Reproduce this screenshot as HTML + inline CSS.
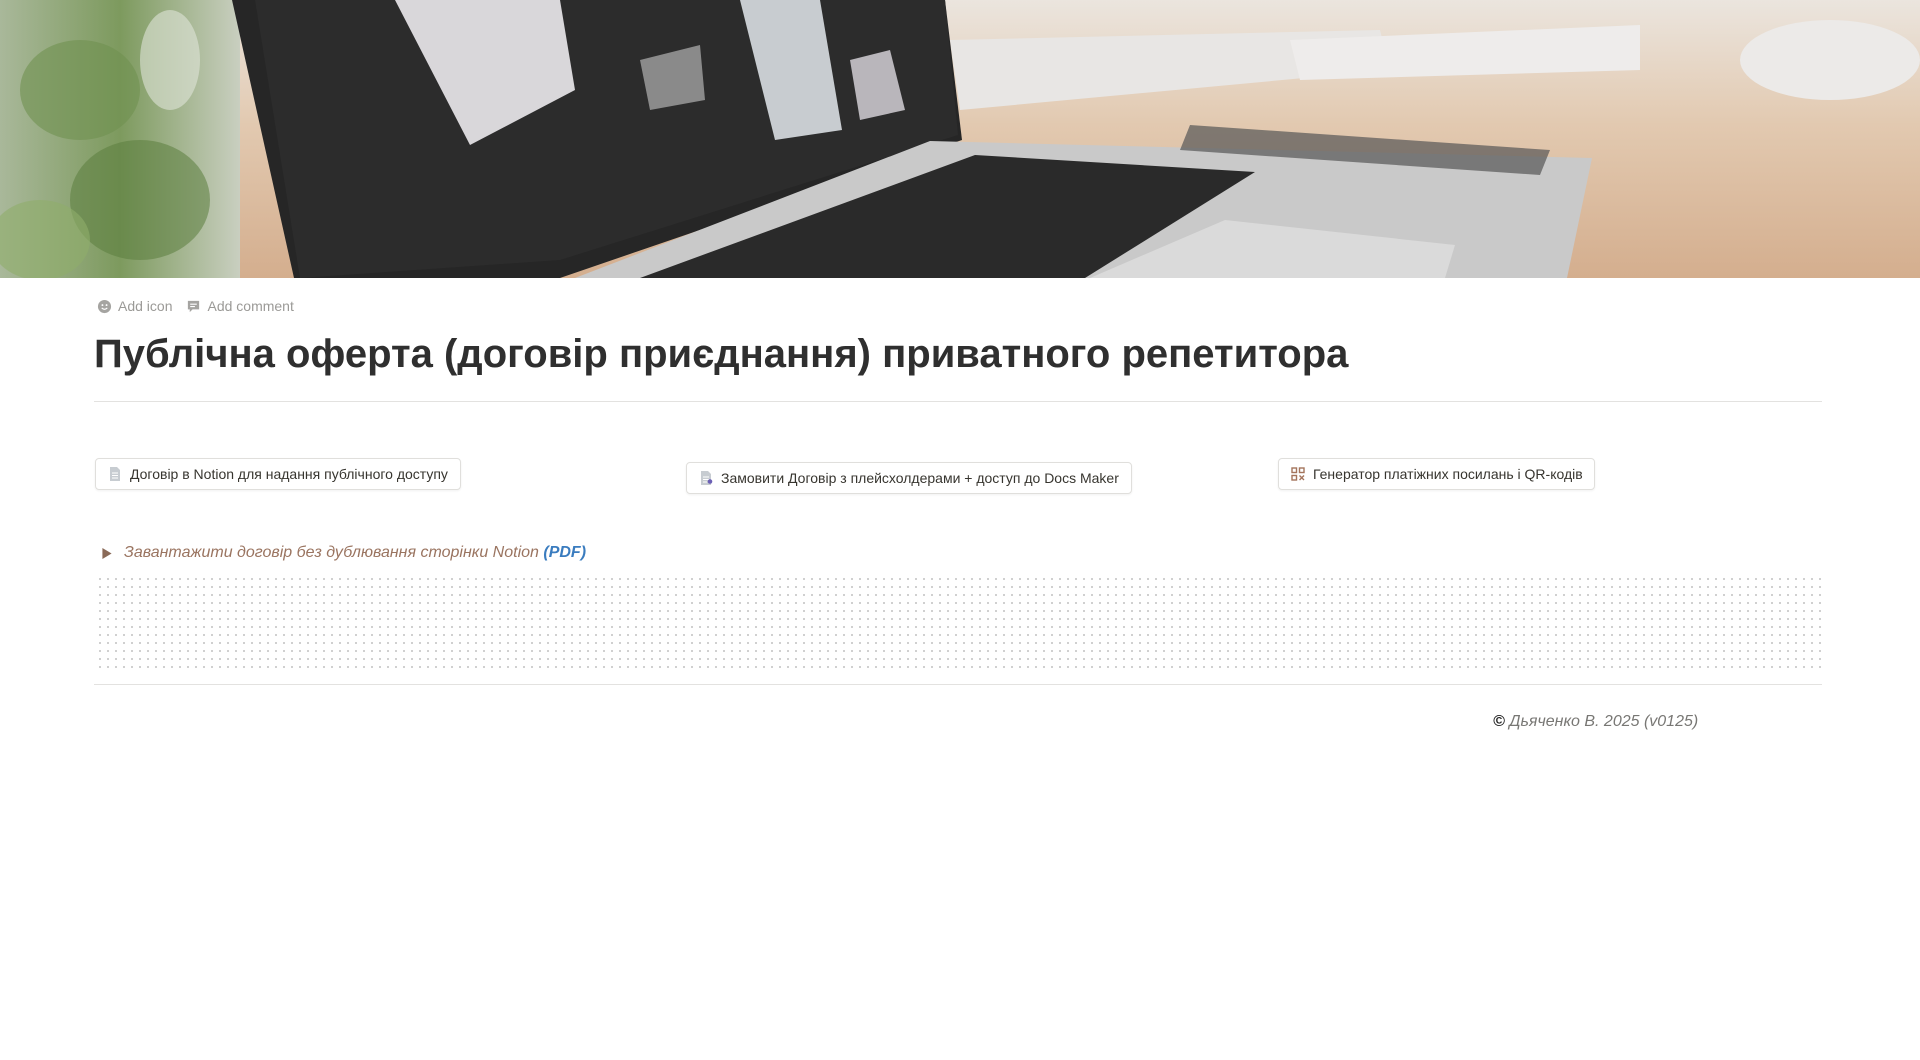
<!DOCTYPE html>
<html><head><meta charset="utf-8"><style>
*{margin:0;padding:0;box-sizing:border-box}
body{width:1920px;height:1060px;background:#fff;font-family:"Liberation Sans",Arial,sans-serif;color:#37352f;position:relative;overflow:hidden}
.abs{position:absolute}
svg{flex-shrink:0}
.meta{top:298px;left:97px;font-size:14px;color:#9b9a97;display:flex;gap:14px;align-items:center}
.meta span{display:flex;align-items:center;gap:6px}
h1{position:absolute;left:94px;top:332px;font-size:40px;font-weight:700;color:#2f2f2f;white-space:nowrap}
.hr{position:absolute;left:94px;width:1728px;height:1px;background:#e3e2e0}
.btn{position:absolute;height:32px;border:1px solid #e0dfdc;border-radius:4px;box-shadow:0 1px 2px rgba(0,0,0,.06);font-size:14px;color:#37352f;display:flex;align-items:center;padding:0 10px 0 12px;gap:8px;white-space:nowrap;overflow:hidden}
.tog{position:absolute;left:124px;top:544px;font-size:16px;font-style:italic;color:#9a7460;white-space:nowrap}
.tog b{color:#3a7cbf;font-style:italic}
.dots{position:absolute;left:96px;top:575px;width:1726px;height:99px;background-image:radial-gradient(circle,#c9c9c9 0.9px,transparent 1.2px);background-size:8px 8px}
.foot{position:absolute;left:1493px;top:713px;font-size:16px;font-style:italic;color:#787774;white-space:nowrap}
</style></head><body>
<svg class="abs" style="left:0;top:0" width="1920" height="278" viewBox="0 0 1920 278">
<defs>
<linearGradient id="bg" x1="0" y1="0" x2="0" y2="1"><stop offset="0" stop-color="#ebe5de"/><stop offset="0.45" stop-color="#e2c9b0"/><stop offset="1" stop-color="#d4ae8e"/></linearGradient>
<linearGradient id="pl" x1="0" y1="0" x2="1" y2="0"><stop offset="0" stop-color="#a9b89a"/><stop offset="0.5" stop-color="#7d9a5e"/><stop offset="1" stop-color="#c9cfc0"/></linearGradient>
</defs>
<rect width="1920" height="278" fill="url(#bg)"/>
<polygon points="950,40 1380,30 1390,70 960,110" fill="#e8e6e4"/>
<polygon points="1290,40 1640,25 1640,70 1300,80" fill="#eeeceb"/>
<ellipse cx="1830" cy="60" rx="90" ry="40" fill="#eceae8"/>
<rect x="0" y="0" width="240" height="278" fill="url(#pl)"/>
<ellipse cx="80" cy="90" rx="60" ry="50" fill="#6f9150" opacity=".6"/>
<ellipse cx="140" cy="200" rx="70" ry="60" fill="#5b7e3e" opacity=".55"/>
<ellipse cx="40" cy="240" rx="50" ry="40" fill="#8fae6a" opacity=".6"/>
<ellipse cx="170" cy="60" rx="30" ry="50" fill="#dfe4d8" opacity=".6"/>
<polygon points="232,0 945,0 962,140 560,278 294,278" fill="#262626"/>
<polygon points="255,0 945,0 958,135 560,260 300,278" fill="#2c2c2c"/>
<polygon points="395,0 560,0 575,90 470,145" fill="#d9d7da"/>
<polygon points="740,0 820,0 842,130 775,140" fill="#c8ccd0"/>
<polygon points="640,60 700,45 705,100 650,110" fill="#8a8a8a"/>
<polygon points="850,60 890,50 905,110 860,120" fill="#b9b6bb"/>
<polygon points="930,141 1592,158 1567,278 575,278" fill="#c9c9c9"/>
<polygon points="975,155 1255,172 1085,278 640,278" fill="#2a2a2a"/>
<polygon points="1225,220 1455,245 1445,278 1090,278" fill="#dadada"/>
<polygon points="1190,125 1550,150 1540,175 1180,150" fill="#555" opacity=".7"/>
</svg>
<div class="abs meta">
<span><svg width="15" height="15" viewBox="0 0 16 16"><circle cx="8" cy="8" r="7" fill="#a5a4a1"/><circle cx="5.8" cy="6.5" r="1" fill="#fff"/><circle cx="10.2" cy="6.5" r="1" fill="#fff"/><path d="M5 9.5q3 3 6 0" stroke="#fff" stroke-width="1.2" fill="none"/></svg>Add icon</span>
<span><svg width="15" height="15" viewBox="0 0 16 16"><path d="M2 2h12v9H7l-3 3v-3H2z" fill="#a5a4a1"/><path d="M4.5 5.5h7M4.5 8h5" stroke="#fff" stroke-width="1.2"/></svg>Add comment</span>
</div>
<h1>Публічна оферта (договір приєднання) приватного репетитора</h1>
<div class="hr" style="top:401px"></div>
<div class="btn" style="left:95px;top:458px;width:366px"><svg width="14" height="16" viewBox="0 0 14 16"><path d="M2 1h7l3 3v11H2z" fill="#c7ccd1"/><path d="M4 7h6M4 9.5h6M4 12h6" stroke="#fff" stroke-width="1"/></svg>Договір в Notion для надання публічного доступу</div>
<div class="btn" style="left:686px;top:462px;width:446px"><svg width="14" height="16" viewBox="0 0 14 16"><path d="M2 1h7l3 3v11H2z" fill="#c7ccd1"/><path d="M4 7h6M4 9.5h6M4 12h4" stroke="#fff" stroke-width="1"/><circle cx="11" cy="11.5" r="2.3" fill="#6b5fb5"/></svg>Замовити Договір з плейсхолдерами + доступ до Docs Maker</div>
<div class="btn" style="left:1278px;top:458px;width:317px"><svg width="14" height="14" viewBox="0 0 14 14" fill="none" stroke="#a4745c" stroke-width="1.4"><rect x="1" y="1" width="4.5" height="4.5"/><rect x="8.5" y="1" width="4.5" height="4.5"/><rect x="1" y="8.5" width="4.5" height="4.5"/><path d="M8.5 8.5l4.5 4.5M13 8.5l-4.5 4.5"/></svg>Генератор платіжних посилань і QR-кодів</div>
<svg class="abs" style="left:102px;top:548px" width="10" height="11" viewBox="0 0 10 12"><path d="M0 0l10 6-10 6z" fill="#8a6a58"/></svg>
<div class="tog">Завантажити договір без дублювання сторінки Notion <b>(PDF)</b></div>
<div class="dots"></div>
<div class="hr" style="top:684px"></div>
<div class="foot"><span style="color:#222;font-weight:700">©</span> Дьяченко В. 2025 (v0125)</div>
</body></html>
